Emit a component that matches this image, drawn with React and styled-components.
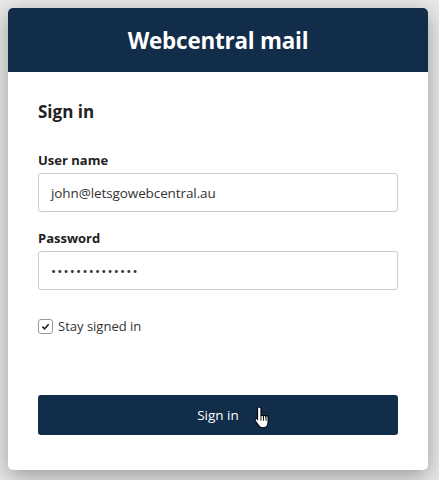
import React from 'react'
import styled, { createGlobalStyle } from 'styled-components'

const GlobalStyle = createGlobalStyle`
  html, body {
    margin: 0;
    padding: 0;
    background: #e9e9e9;
    font-family: "Open Sans", "Noto Sans", sans-serif;
  }
`

const Page = styled.div`
  width: 439px;
  height: 480px;
  padding: 8px 11px 10px 8px;
  box-sizing: border-box;
  background: #e9e9e9;
`

const Card = styled.div`
  width: 420px;
  height: 462px;
  background: #fff;
  border-radius: 5px;
  overflow: hidden;
  box-shadow: 0 6px 22px rgba(0, 0, 0, 0.35);
  display: flex;
  flex-direction: column;
`

const Header = styled.div`
  height: 64px;
  background: #112d4a;
  color: #fff;
  display: flex;
  align-items: center;
  justify-content: center;
  font-size: 22.4px;
  font-weight: 700;
  letter-spacing: -0.2px;
`

const Body = styled.div`
  padding: 28px 30px 0 30px;
  display: flex;
  flex-direction: column;
`

const Title = styled.h2`
  margin: 0 0 28px;
  font-size: 17px;
  font-weight: 700;
  color: #222;
`

const Label = styled.label`
  font-size: 13px;
  font-weight: 700;
  color: #222;
  margin-bottom: 4px;
`

const Input = styled.div`
  height: 39px;
  border: 1px solid #ccc;
  border-radius: 3px;
  box-sizing: border-box;
  display: flex;
  align-items: center;
  padding: 0 12px;
  font-size: 13.5px;
  color: #333;
  margin-bottom: ${({ $gap }) => $gap}px;
  letter-spacing: ${({ $dots }) => ($dots ? '1.2px' : '-0.1px')};
`

const CheckRow = styled.div`
  display: flex;
  align-items: center;
  gap: 5px;
  font-size: 13px;
  color: #333;
`

const Box = styled.span`
  width: 13px;
  height: 13px;
  border: 1px solid #999;
  border-radius: 3px;
  display: flex;
  align-items: center;
  justify-content: center;
`

const Button = styled.div`
  position: relative;
  margin-top: 60px;
  height: 40px;
  background: #112d4a;
  border-radius: 3px;
  color: #fff;
  font-size: 13.5px;
  display: flex;
  align-items: center;
  justify-content: center;
`

const Cursor = styled.svg`
  position: absolute;
  left: 216px;
  top: 10px;
`

export default function App() {
  return (
    <Page>
      <GlobalStyle />
      <Card>
        <Header>Webcentral mail</Header>
        <Body>
          <Title>Sign in</Title>
          <Label>User name</Label>
          <Input $gap={17}>john@letsgowebcentral.au</Input>
          <Label>Password</Label>
          <Input $gap={27} $dots>••••••••••••••</Input>
          <CheckRow>
            <Box>
              <svg width="9" height="9" viewBox="0 0 10 10">
                <path d="M1.5 5.2 L4 7.5 L8.5 2.5" fill="none" stroke="#222" strokeWidth="1.8" />
              </svg>
            </Box>
            Stay signed in
          </CheckRow>
          <Button>
            Sign in
            <Cursor width="19" height="26" viewBox="0 0 18 24">
              <path
                d="M5 1.5c1 0 1.6.6 1.6 1.6v7.2c.2-1 1.9-1 2.2 0 .3-1 2-1 2.3.1.3-.9 2-.9 2.2.3v5.3c0 2.6-1.7 5.2-4.8 5.2H8c-1.6 0-2.6-.6-3.4-1.7L1.3 14.8c-.6-.8-.3-1.8.5-2.1.6-.3 1.3 0 1.7.5l-.1.1 0 0V3.1C3.4 2.1 4 1.5 5 1.5z"
                fill="#fff"
                stroke="#000"
                strokeWidth="1"
              />
              <path d="M6.6 10.5v4M9 10.6v4M11.4 10.7v4" stroke="#000" strokeWidth="0.9" />
            </Cursor>
          </Button>
        </Body>
      </Card>
    </Page>
  )
}
